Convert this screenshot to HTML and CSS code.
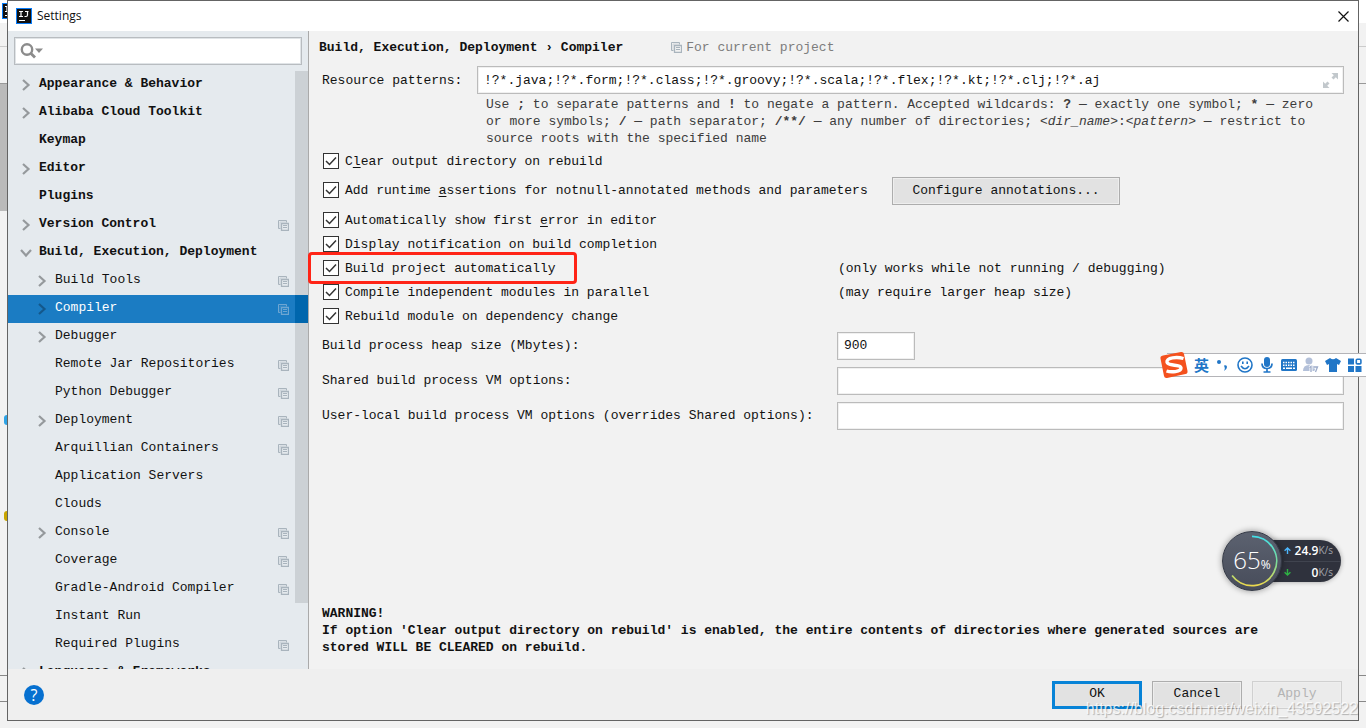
FILE: index.html
```html
<!DOCTYPE html>
<html lang="en">
<head>
<meta charset="utf-8">
<title>Settings</title>
<link rel="stylesheet" href="styles.css">
</head>
<body>
<svg class="defs" aria-hidden="true">
  <symbol id="idea" viewBox="0 0 16 16">
    <rect x=".5" y=".5" width="15" height="15" fill="#111" stroke="#087cfa"/>
    <path d="M3 3.500h4M5 3.500v5M3 8.500h4M9 3.500h3.500M11.500 3.500v3.500q0 1.500-1.500 1.500h-1.500M3 12.500h6" fill="none" stroke="#fff" stroke-width="1.200"/>
  </symbol>
  <symbol id="chev" viewBox="0 0 8 12"><path d="M1 1l5.500 5-5.500 5" fill="none" stroke="currentColor" stroke-width="2.200"/></symbol>
  <symbol id="chev-down" viewBox="0 0 12 8"><path d="M1 1l5 5.500 5-5.500" fill="none" stroke="currentColor" stroke-width="2.200"/></symbol>
  <symbol id="copy" viewBox="0 0 11 11">
    <path d="M2.500 8.500h-2v-8h8v2" fill="none" stroke="currentColor"/>
    <path d="M2 8V2h6" fill="none" stroke="currentColor" stroke-opacity=".4"/>
    <path d="M3.500 3.500h7v7h-7z" fill="none" stroke="currentColor" stroke-width="1.300"/>
    <path d="M5 5.500h4M5 7.500h4" fill="none" stroke="currentColor"/>
  </symbol>
</svg>

<div class="desk">
  <div class="desk-title"><svg class="idea"><use href="#idea"/></svg></div>
  <div class="desk-menu"></div>
  <div class="desk-tools"></div>
  <div class="desk-tab"></div>
  <div class="desk-space"><i class="blob blue"></i><i class="blob gold"></i></div>
  <div class="desk-panel"></div>
  <div class="desk-status"></div>
</div>

<div class="dialog" role="dialog" aria-labelledby="dlg-title">
  <header class="titlebar">
    <svg class="idea"><use href="#idea"/></svg>
    <h1 id="dlg-title">Settings</h1>
    <button class="plain close" aria-label="Close"><svg viewBox="0 0 11 11"><path d="M.5.5l10 10M10.500.5l-10 10" stroke="#111" stroke-width="1.200"/></svg></button>
  </header>

  <div class="content">
    <nav class="sidebar">
      <div class="search">
        <svg viewBox="0 0 24 18"><circle cx="7" cy="7.500" r="5.200" fill="none" stroke="#8c8c8c" stroke-width="2.400"/><path d="M10.500 11l4.500 4.500" stroke="#8c8c8c" stroke-width="2.800"/><path d="M15 6.500h8l-4 4.500z" fill="#8c8c8c"/></svg>
        <input type="search" aria-label="Search settings">
      </div>
      <div class="tree-wrap">
        <ul class="tree">
          <li class="top"><svg class="chev"><use href="#chev"/></svg><span>Appearance &amp; Behavior</span></li>
          <li class="top"><svg class="chev"><use href="#chev"/></svg><span>Alibaba Cloud Toolkit</span></li>
          <li class="top"><i class="chev"></i><span>Keymap</span></li>
          <li class="top"><svg class="chev"><use href="#chev"/></svg><span>Editor</span></li>
          <li class="top"><i class="chev"></i><span>Plugins</span></li>
          <li class="top"><svg class="chev"><use href="#chev"/></svg><span>Version Control</span><svg class="copy"><use href="#copy"/></svg></li>
          <li class="top"><svg class="chev"><use href="#chev-down"/></svg><span>Build, Execution, Deployment</span></li>
          <li><svg class="chev"><use href="#chev"/></svg><span>Build Tools</span><svg class="copy"><use href="#copy"/></svg></li>
          <li class="selected" aria-current="page"><svg class="chev"><use href="#chev"/></svg><span>Compiler</span><svg class="copy"><use href="#copy"/></svg></li>
          <li><svg class="chev"><use href="#chev"/></svg><span>Debugger</span></li>
          <li><i class="chev"></i><span>Remote Jar Repositories</span><svg class="copy"><use href="#copy"/></svg></li>
          <li><i class="chev"></i><span>Python Debugger</span><svg class="copy"><use href="#copy"/></svg></li>
          <li><svg class="chev"><use href="#chev"/></svg><span>Deployment</span><svg class="copy"><use href="#copy"/></svg></li>
          <li><i class="chev"></i><span>Arquillian Containers</span><svg class="copy"><use href="#copy"/></svg></li>
          <li><i class="chev"></i><span>Application Servers</span></li>
          <li><i class="chev"></i><span>Clouds</span></li>
          <li><svg class="chev"><use href="#chev"/></svg><span>Console</span><svg class="copy"><use href="#copy"/></svg></li>
          <li><i class="chev"></i><span>Coverage</span><svg class="copy"><use href="#copy"/></svg></li>
          <li><i class="chev"></i><span>Gradle-Android Compiler</span><svg class="copy"><use href="#copy"/></svg></li>
          <li><i class="chev"></i><span>Instant Run</span></li>
          <li><i class="chev"></i><span>Required Plugins</span><svg class="copy"><use href="#copy"/></svg></li>
          <li class="top"><svg class="chev"><use href="#chev"/></svg><span>Languages &amp; Frameworks</span></li>
        </ul>
        <div class="thumb"></div>
      </div>
    </nav>

    <main class="page">
      <div class="crumbs">
        <h2>Build, Execution, Deployment › Compiler</h2>
        <p class="scope"><svg class="copy"><use href="#copy"/></svg>For current project</p>
      </div>

      <div class="form">
        <div class="patterns">
          <label for="patterns">Resource patterns:</label>
          <div class="field expandable">
            <input id="patterns" type="text" value="!?*.java;!?*.form;!?*.class;!?*.groovy;!?*.scala;!?*.flex;!?*.kt;!?*.clj;!?*.aj">
            <button class="plain" aria-label="Expand"><svg viewBox="0 0 15 15"><path d="M8.500 0h6.500v6.500l-2.200-2.200-2.300 2.300-2-2 2.300-2.300zM6.500 15h-6.500v-6.500l2.200 2.200 2.300-2.300 2 2-2.300 2.300z" fill="#c2c8cc"/></svg></button>
          </div>
          <p class="hint">Use <b>;</b> to separate patterns and <b>!</b> to negate a pattern. Accepted wildcards: <b>?</b> — exactly one symbol; <b>*</b> — zero or more symbols; <b>/</b> — path separator; <b>/**/</b> — any number of directories; <i>&lt;dir_name&gt;</i>:<i>&lt;pattern&gt;</i> — restrict to source roots with the specified name</p>
        </div>

        <div class="options">
          <div class="opt"><label><input type="checkbox" checked><span>C<u>l</u>ear output directory on rebuild</span></label></div>
          <div class="opt wide"><label><input type="checkbox" checked><span>Add runtime <u>a</u>ssertions for notnull-annotated methods and parameters</span></label><button class="btn">Configure annotations...</button></div>
          <div class="opt"><label><input type="checkbox" checked><span>Automatically show first <u>e</u>rror in editor</span></label></div>
          <div class="opt"><label><input type="checkbox" checked><span>Display notification on build completion</span></label></div>
          <div class="opt split"><label><input type="checkbox" checked><span>Build project automatically</span></label><span>(only works while not running / debugging)</span><i class="marker"></i></div>
          <div class="opt split"><label><input type="checkbox" checked><span>Compile independent modules in parallel</span></label><span>(may require larger heap size)</span></div>
          <div class="opt"><label><input type="checkbox" checked><span>Rebuild module on dependency change</span></label></div>
        </div>

        <div class="fields">
          <label for="heap">Build process heap size (Mbytes):</label><input class="field short" id="heap" type="text" value="900">
          <label for="shared">Shared build process VM options:</label><input class="field" id="shared" type="text">
          <label for="local">User-local build process VM options (overrides Shared options):</label><input class="field" id="local" type="text">
        </div>

        <p class="warning">WARNING!<br>If option 'Clear output directory on rebuild' is enabled, the entire contents of directories where generated sources are stored WILL BE CLEARED on rebuild.</p>
      </div>
    </main>
  </div>

  <footer class="actions">
    <button class="help" aria-label="Help">?</button>
    <button class="btn primary">OK</button>
    <button class="btn">Cancel</button>
    <button class="btn" disabled>Apply</button>
  </footer>
</div>

<div class="ime">
  <svg class="ime-logo" viewBox="0 0 28 28"><path d="M3 4.500L21 1q2.500-.4 3 2l3.500 17q.4 2.500-2 3L7 27q-2.500.4-3-2L.5 7.500Q0 5 3 4.500z" fill="#f4511e"/><path d="M23.500 7.500C17 5.500 6.500 6.500 7 11c.5 4.500 14 2 14 6 0 4-10 4.500-14.500 3" fill="none" stroke="#fff" stroke-width="3.400"/></svg>
  <span class="ime-lang">英</span>
  <svg viewBox="0 0 16 16"><circle cx="4" cy="5" r="2" fill="#2176c7"/><path d="M9 8.500q3-1 3 1.500t-3 4q1-2 .8-3z" fill="#2176c7"/></svg>
  <svg viewBox="0 0 16 16"><g fill="none" stroke="#2176c7" stroke-width="1.600"><circle cx="8" cy="8" r="7"/><path d="M4 9q4 5.500 8 0M5.800 4.500v2.500M10.200 4.500v2.500"/></g></svg>
  <svg viewBox="0 0 16 16"><rect x="5" y="0" width="6" height="10" rx="3" fill="#2176c7"/><path d="M3 6.500q0 5 5 5t5-5M8 11.500v3M4.500 15h7" fill="none" stroke="#2176c7" stroke-width="1.700"/></svg>
  <svg viewBox="0 0 16 16"><rect x="0" y="2" width="16" height="12" rx="1.500" fill="#2176c7"/><path d="M2 5.500h12M2 8.200h12" stroke="#fff" stroke-width="1.500" stroke-dasharray="1.500 1"/><path d="M2 11.200h2M5 11.200h6M12 11.200h2" stroke="#fff" stroke-width="1.400"/></svg>
  <svg viewBox="0 0 16 16"><circle cx="6" cy="4" r="3.500" fill="#b3c0d9"/><path d="M0 14q0-6 6-6 5 0 7 3v3z" fill="#b3c0d9"/><path d="M6.500 10.500l1.500-1v5.500M10.500 10h4l-2 5" fill="none" stroke="#fff" stroke-width="3"/><path d="M6.500 10.500l1.500-1v5.500M10.500 10h4l-2 5" fill="none" stroke="#9cabc9" stroke-width="1.300"/></svg>
  <svg viewBox="0 0 16 16"><path d="M5 1q3 2.500 6 0l5 3-2 4-2-1v8H4V7L2 8 0 4z" fill="#2176c7"/></svg>
  <svg viewBox="0 0 16 16"><path d="M1 1.500h6v6H1zM1 9h6v6H1zM8.500 9h6v6h-6z" fill="#2176c7"/><rect x="9.300" y="2.300" width="4.600" height="4.600" rx="1" fill="none" stroke="#2176c7" stroke-width="1.600"/></svg>
</div>

<div class="meter">
  <div class="gauge">
    <svg viewBox="0 0 60 60">
      <defs><linearGradient id="ring" x1="0" y1="0" x2="0" y2="1"><stop offset="0" stop-color="#43dfe8"/><stop offset=".55" stop-color="#7fdc96"/><stop offset="1" stop-color="#ecd84d"/></linearGradient></defs>
      <path d="M30 4.500A25.500 25.500 0 1 1 9.400 45" fill="none" stroke="url(#ring)" stroke-width="1.800"/>
    </svg>
    <span class="pct">65<small>%</small></span>
  </div>
  <div class="rates">
    <p><svg viewBox="0 0 7 7"><path d="M3.500 7V1M.6 3.800L3.500 1l2.900 2.800" fill="none" stroke="#4db8ff" stroke-width="1.400"/></svg><b>24.9</b><small>K/s</small></p>
    <p><svg viewBox="0 0 7 7"><path d="M3.500 0v6M.6 3.200L3.500 6l2.900-2.800" fill="none" stroke="#2fb344" stroke-width="1.400"/></svg><b>0</b><small>K/s</small></p>
  </div>
</div>

<div class="watermark">https://blog.csdn.net/weixin_43592522</div>
</body>
</html>
```
FILE: styles.css
```css
* { box-sizing: border-box; }
html, body { height: 100%; }
body {
  margin: 0;
  overflow: hidden;
  background: #f2f2f2;
  color: #111;
  font: 13px/17px "Courier New", "Liberation Mono", monospace;
}
h1, h2, p, ul { margin: 0; padding: 0; }
button, input { font: inherit; color: inherit; }
.defs { position: absolute; width: 0; height: 0; }
.plain { padding: 0; border: 0; background: none; display: flex; }
.idea { width: 16px; height: 16px; flex: none; }

/* Main window behind the dialog */
.desk { height: 100%; display: flex; flex-direction: column; }
.desk-title { height: 23px; background: #fff; padding: 3px 2px; }
.desk-menu { height: 24px; border-bottom: 1px solid #ccc; }
.desk-tools { height: 37px; border-bottom: 1px solid #999; }
.desk-tab { height: 127px; width: 8px; background: #bababa; }
.desk-space { flex: 1; display: flex; flex-direction: column; padding: 204px 4px 0; gap: 86px; }
.blob { width: 8px; height: 10px; border-radius: 3px; }
.blue { background: #2ea3e6; }
.gold { background: #c9a500; }
.desk-panel { height: 27px; border: solid #888; border-width: 1px 0; }
.desk-status { height: 26px; }

/* Dialog */
.dialog {
  position: absolute;
  inset: 0 7px 7px;
  display: flex;
  flex-direction: column;
  border: 1px solid #646464;
  background: #f2f2f2;
}
.titlebar {
  height: 30px;
  flex: none;
  display: flex;
  align-items: center;
  gap: 5px;
  padding: 0 9px 0 8px;
  background: #fff;
}
.titlebar h1 { flex: 1; font: 12px/16px "Open Sans", sans-serif; }
.close svg { width: 11px; height: 11px; }
.content { flex: 1; min-height: 0; display: flex; }

.sidebar {
  width: 301px;
  flex: none;
  display: flex;
  flex-direction: column;
  gap: 6px;
  padding-top: 6px;
  background: #e5eaee;
  border-right: 1px solid #aaa;
}
.search {
  height: 28px;
  flex: none;
  display: flex;
  align-items: center;
  margin: 0 6px;
  padding: 0 5px;
  background: #fff;
  border: 1px solid #b8bcc0;
  box-shadow: inset 0 0 0 1px #e0e4e7;
}
.search svg { width: 24px; height: 18px; flex: none; }
.search input { flex: 1; min-width: 0; border: 0; outline: 0; background: none; }
.tree-wrap { flex: 1; min-height: 0; position: relative; overflow: hidden; }
.tree { list-style: none; }
.tree li {
  height: 28px;
  display: flex;
  align-items: center;
  gap: 7px;
  padding: 0 19px 0 28px;
}
.tree li.top { padding-left: 12px; font-weight: bold; }
.tree span { flex: 1; padding-bottom: 4px; white-space: nowrap; }
.chev { width: 12px; height: 12px; flex: none; color: #95999c; }
.copy { width: 11px; height: 11px; flex: none; color: #a9b4bd; }
.tree .selected { background: linear-gradient(to left, #0066ad 13px, #1b7cc3 13px); color: #fff; }
.selected .chev { color: #14588b; }
.selected .copy { color: #6ea6d2; }
.selected { position: relative; z-index: 1; }
.thumb { position: absolute; top: 0; right: 0; width: 13px; height: 532px; background: #ccd1d5; }

/* Settings page */
.page { flex: 1; min-width: 0; display: flex; flex-direction: column; padding: 0 14px 13px 10px; }
.crumbs { height: 32px; flex: none; display: flex; align-items: center; gap: 48px; }
.crumbs h2 { font-size: 13px; }
.scope { display: flex; align-items: center; gap: 4px; color: #7d7d7d; }
.form { flex: 1; display: flex; flex-direction: column; padding: 3px 0 0 3px; }
.field {
  width: 100%;
  height: 28px;
  padding: 0 6px;
  background: #fff;
  border: 1px solid #bbb;
  box-shadow: inset 0 0 0 1px #f0f0f0;
  outline: 0;
}
.patterns { display: grid; grid-template-columns: 155px 1fr; align-items: center; row-gap: 2px; }
.expandable { display: flex; align-items: center; padding-right: 5px; }
.expandable input { flex: 1; min-width: 0; padding: 0; border: 0; outline: 0; background: none; }
.expandable svg { width: 15px; height: 15px; }
.hint { grid-column: 2; max-width: calc(107ch + 18px); padding: 0 9px; color: #3c3c3c; }

.options { display: flex; flex-direction: column; padding-top: 2px; }
.opt { height: 24px; display: flex; align-items: center; position: relative; }
.opt label { display: flex; align-items: center; gap: 6px; }
.opt.wide { height: 28px; margin: 4px 0 3px; }
.opt.wide label { width: 570px; flex: none; padding-bottom: 2px; }
.split label { width: 516px; flex: none; }
.opt u { text-underline-offset: 2px; }
.opt input {
  appearance: none;
  width: 16px;
  height: 16px;
  margin: 0 0 0 1px;
  flex: none;
  border: 1px solid #333;
  background: #fff;
}
.opt input:checked {
  background: #fff url("data:image/svg+xml,%3Csvg xmlns='http://www.w3.org/2000/svg' viewBox='0 0 14 14'%3E%3Cpath d='M2 7l3.500 3.500L12 3.500' fill='none' stroke='%23333' stroke-width='1.500'/%3E%3C/svg%3E");
}
.marker {
  position: absolute;
  left: -14px;
  top: -4px;
  width: 269px;
  height: 32px;
  border: 3px solid #ff2416;
  border-radius: 4px;
}

.fields { display: grid; grid-template-columns: 515px 1fr; align-items: center; row-gap: 7px; padding-top: 4px; }
.fields label { padding-bottom: 2px; }
.fields .field { padding: 0 6px 2px; }
.short { width: 78px; }
.warning { margin-top: auto; max-width: 122ch; font-weight: bold; }

.btn {
  min-width: 90px;
  height: 28px;
  padding: 0 16px 2px;
  background: #e2e2e2;
  border: 1px solid #adadad;
  box-shadow: inset 0 0 0 1px #eee;
}
.primary { border: 3px solid #0783d7; box-shadow: none; }
.btn:disabled { color: #b4b4b4; background: #ebebeb; border-color: #d0d0d0; }
.wide .btn { width: 228px; }

.actions { height: 51px; flex: none; display: flex; align-items: center; gap: 10px; padding: 0 16px; background: #efefef; }
.help {
  width: 20px;
  height: 20px;
  margin-right: auto;
  padding: 0;
  border: 0;
  border-radius: 50%;
  background: #0670d0;
  color: #fff;
  font: 16px/20px "Open Sans", sans-serif;
}

/* Floating input-method bar */
.ime {
  position: absolute;
  top: 353px;
  right: 0;
  height: 24px;
  display: flex;
  align-items: center;
  gap: 6px;
  padding-right: 3px;
  background: #fff;
  border: solid #b4b4b8;
  border-width: 1px 0;
}
.ime svg { width: 16px; height: 16px; flex: none; }
.ime .ime-logo { width: 28px; height: 28px; margin-left: -7px; }
.ime-lang { width: 15px; color: #2176c7; font: bold 15px/20px "Noto Sans CJK SC", sans-serif; }

/* Floating network and memory meter */
.meter { position: absolute; top: 531px; right: 25px; display: flex; align-items: center; color: #fff; font-family: "Open Sans", sans-serif; }
.gauge {
  width: 60px;
  height: 60px;
  position: relative;
  z-index: 1;
  border-radius: 50%;
  border: 1px solid #343945;
  background: linear-gradient(#5c6270, #474c5a);
  box-shadow: 0 0 6px #0006;
}
.gauge svg { display: block; }
.pct { position: absolute; inset: 0; display: flex; align-items: baseline; justify-content: center; font-size: 24px; font-weight: 300; line-height: 56px; }
.pct small { font-size: 12px; font-weight: 400; }
.rates { width: 73px; margin-left: -14px; padding-left: 16px; border-radius: 0 21px 21px 0; background: #2f323d; box-shadow: 0 0 5px #0005; }
.rates p { height: 21px; display: flex; align-items: center; padding-right: 8px; }
.rates p + p { border-top: 1px solid #40444f; }
.rates svg { width: 7px; height: 7px; margin-right: auto; }
.rates b { font-weight: 600; font-size: 12px; }
.rates small { font-size: 10px; color: #a0a3aa; }

.watermark {
  position: absolute;
  right: 8px;
  bottom: 9px;
  color: #fffc;
  font: 16px/20px "Liberation Sans", Arial, sans-serif;
  text-shadow: 1px 1px 1px #0004;
  pointer-events: none;
}
```
